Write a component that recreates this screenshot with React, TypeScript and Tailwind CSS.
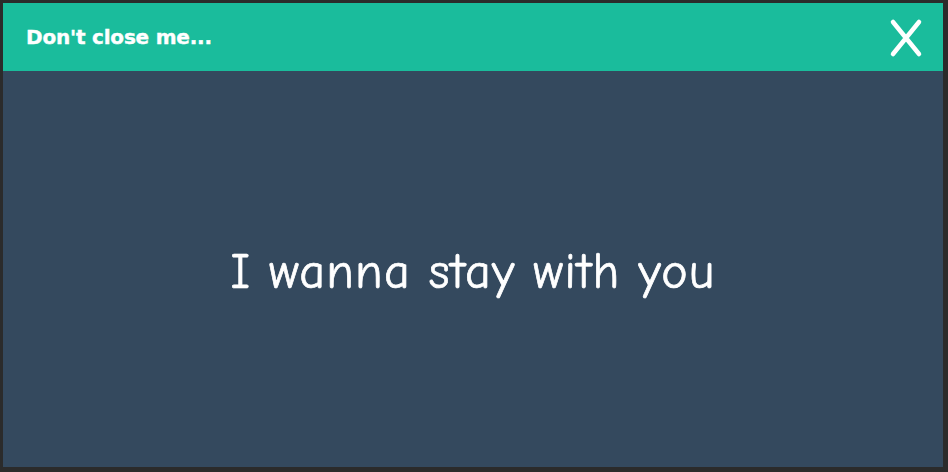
export default function App() {
  return (
    <div className="w-[948px] h-[472px] bg-[#2b2b2b] pt-[3px] pl-[3px] pr-[5px] pb-[5px]">
      <div className="flex h-full flex-col">
        <div className="flex h-[68px] items-center justify-between bg-[#1abc9c] pl-[23px] pr-[20px]">
          <span className="text-[20px] font-bold text-white [-webkit-text-stroke:0.4px_white]" style={{ fontFamily: '"DejaVu Sans", Verdana, sans-serif', letterSpacing: '-0.2px' }}>
            Don't close me...
          </span>
          <svg width="34" height="40" viewBox="0 0 34 40" className="mt-[1px]">
            <path d="M4 4 L30 36 M30 4 L4 36" stroke="white" strokeWidth="4.5" strokeLinecap="round" fill="none" />
          </svg>
        </div>
        <div className="flex flex-1 items-center justify-center bg-[#34495e] pt-[6px]">
          <span className="text-[50px] text-white tracking-[1.2px] [-webkit-text-stroke:0.7px_white]" style={{ fontFamily: '"Comic Sans MS", "Comic Neue", cursive' }}>
            I wanna stay with you
          </span>
        </div>
      </div>
    </div>
  );
}
